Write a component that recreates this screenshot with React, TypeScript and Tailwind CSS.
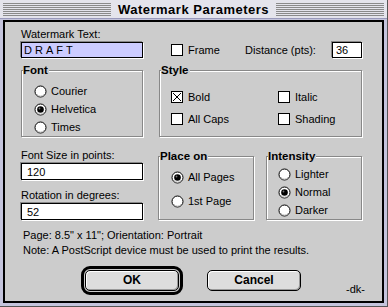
import React from "react";

const font = { fontFamily: '"Liberation Sans", Arial, sans-serif' };

function Radio({ on }: { on?: boolean }) {
  return (
    <svg width="13" height="13" viewBox="0 0 13 13" className="shrink-0">
      <circle cx="6.5" cy="6.5" r="5.5" fill="#fff" stroke="#000" strokeWidth="1" />
      <path d="M3 9.5 A4.5 4.5 0 0 0 10 9.5" fill="none" stroke="#bbb" strokeWidth="1" />
      {on && <circle cx="6.5" cy="6.5" r="3.3" fill="#000" />}
      {on && <circle cx="5.5" cy="5.5" r="0.9" fill="#777" />}
    </svg>
  );
}

function Check({ on }: { on?: boolean }) {
  return (
    <svg width="12" height="12" viewBox="0 0 12 12" className="shrink-0">
      <rect x="0.5" y="0.5" width="11" height="11" fill="#fff" stroke="#000" />
      {on && <path d="M2 2 L10 10 M10 2 L2 10" stroke="#000" strokeWidth="1" />}
    </svg>
  );
}

function Group({
  label,
  className,
  children,
}: {
  label: string;
  className: string;
  children: React.ReactNode;
}) {
  return (
    <div
      className={
        "relative border border-[#888] shadow-[1px_1px_0_#fff,inset_1px_1px_0_#fff] " +
        className
      }
    >
      <span className="absolute -top-[8px] left-[1px] bg-[#cccccc] pr-[1px] text-[11.5px] font-bold leading-[14px] text-black">
        {label}
      </span>
      {children}
    </div>
  );
}

function Field({
  value,
  className,
  selected,
}: {
  value: string;
  className: string;
  selected?: boolean;
}) {
  return (
    <div
      className={
        "flex items-center border border-black shadow-[-1px_-1px_0_#888,1px_1px_0_#fff] " +
        (selected ? "bg-[#ccccff] " : "bg-white ") +
        className
      }
    >
      {value}
    </div>
  );
}

export default function App() {
  return (
    <div
      className="flex h-[307px] w-[388px] flex-col border-b border-r border-[#555] bg-[#c4c4dc] text-[11px] leading-[14px] text-black"
      style={font}
    >
      {/* Title bar */}
      <div className="flex h-[19px] items-center gap-[7px] border-b border-[#9999bb] bg-[#e4e4ec] px-[3px]">
        <div className="h-[13px] flex-1 bg-[repeating-linear-gradient(to_bottom,#8a8a8a_0,#8a8a8a_1px,transparent_1px,transparent_2px)]" />
        <div className="text-[13px] font-bold leading-[15px] tracking-[0.5px]">Watermark Parameters</div>
        <div className="h-[13px] flex-1 bg-[repeating-linear-gradient(to_bottom,#8a8a8a_0,#8a8a8a_1px,transparent_1px,transparent_2px)]" />
      </div>

      {/* Frame */}
      <div className="flex flex-1 px-[3px] pb-[3px] pt-[1px]">
        <div className="flex flex-1 flex-col border-2 border-black bg-[#cccccc] pl-[16px] pt-[5px]">
          {/* Row 1 */}
          <div>Watermark Text:</div>
          <div className="mt-[1px] flex items-center">
            <Field value="DRAFT" selected className="h-[16px] w-[122px] pl-[2px] tracking-[3px]" />
            <div className="ml-[28px] flex w-[74px] items-center">
              <Check />
              <span className="ml-[5px]">Frame</span>
            </div>
            <div className="w-[87px]">Distance (pts):</div>
            <Field value="36" className="h-[16px] w-[30px] pl-[3px]" />
          </div>

          {/* Row 2 */}
          <div className="mt-[12px] flex">
            <Group label="Font" className="h-[67px] w-[122px] pl-[12px] pt-[11px]">
              <div className="flex h-[18px] items-center gap-[4px]">
                <Radio />
                <span>Courier</span>
              </div>
              <div className="flex h-[18px] items-center gap-[4px]">
                <Radio on />
                <span>Helvetica</span>
              </div>
              <div className="flex h-[18px] items-center gap-[4px]">
                <Radio />
                <span>Times</span>
              </div>
            </Group>
            <Group label="Style" className="ml-[16px] h-[67px] w-[203px] pl-[11px] pt-[20px]">
              <div className="grid grid-cols-[107px_1fr] gap-y-[10px]">
                <div className="flex h-[12px] items-center gap-[5px]">
                  <Check on />
                  <span>Bold</span>
                </div>
                <div className="flex h-[12px] items-center gap-[5px]">
                  <Check />
                  <span>Italic</span>
                </div>
                <div className="flex h-[12px] items-center gap-[5px]">
                  <Check />
                  <span>All Caps</span>
                </div>
                <div className="flex h-[12px] items-center gap-[5px]">
                  <Check />
                  <span>Shading</span>
                </div>
              </div>
            </Group>
          </div>

          {/* Row 3 */}
          <div className="mt-[11px] flex items-start">
            <div className="flex w-[122px] flex-col">
              <div>Font Size in points:</div>
              <Field value="120" className="mt-[1px] h-[17px] w-[122px] pl-[5px]" />
              <div className="mt-[8px]">Rotation in degrees:</div>
              <Field value="52" className="mt-[1px] h-[17px] w-[122px] pl-[5px]" />
            </div>
            <Group label="Place on" className="ml-[15px] mt-[8px] h-[64px] w-[96px] pl-[12px] pt-[8px]">
              <div className="flex h-[24px] items-center gap-[4px]">
                <Radio on />
                <span>All Pages</span>
              </div>
              <div className="flex h-[24px] items-center gap-[4px]">
                <Radio />
                <span>1st Page</span>
              </div>
            </Group>
            <Group label="Intensity" className="ml-[12px] mt-[8px] h-[64px] w-[96px] pl-[11px] pt-[8px]">
              <div className="flex h-[18px] items-center gap-[4px]">
                <Radio />
                <span>Lighter</span>
              </div>
              <div className="flex h-[18px] items-center gap-[4px]">
                <Radio on />
                <span>Normal</span>
              </div>
              <div className="flex h-[18px] items-center gap-[4px]">
                <Radio />
                <span>Darker</span>
              </div>
            </Group>
          </div>

          {/* Row 4 */}
          <div className="ml-[2px] mt-[8px]">Page: 8.5" x 11"; Orientation: Portrait</div>
          <div className="ml-[2px] mt-[1px]">Note: A PostScript device must be used to print the results.</div>

          {/* Row 5 */}
          <div className="mt-[7px] flex items-center">
            <div className="ml-[60px] flex h-[29px] w-[102px] items-center justify-center rounded-[9px] border-[3px] border-black p-[1px]">
              <button className="flex h-full w-full items-center justify-center rounded-[5px] border border-black bg-[#dddddd] text-[12px] font-bold shadow-[inset_1px_1px_0_#fff,inset_-1px_-1px_0_#999]">
                OK
              </button>
            </div>
            <button className="ml-[24px] flex h-[21px] w-[94px] items-center justify-center rounded-[5px] border border-black bg-[#dddddd] text-[12px] font-bold shadow-[inset_1px_1px_0_#fff,inset_-1px_-1px_0_#999]">
              Cancel
            </button>
            <div className="ml-[45px] mt-[18px]">-dk-</div>
          </div>
        </div>
      </div>
    </div>
  );
}
